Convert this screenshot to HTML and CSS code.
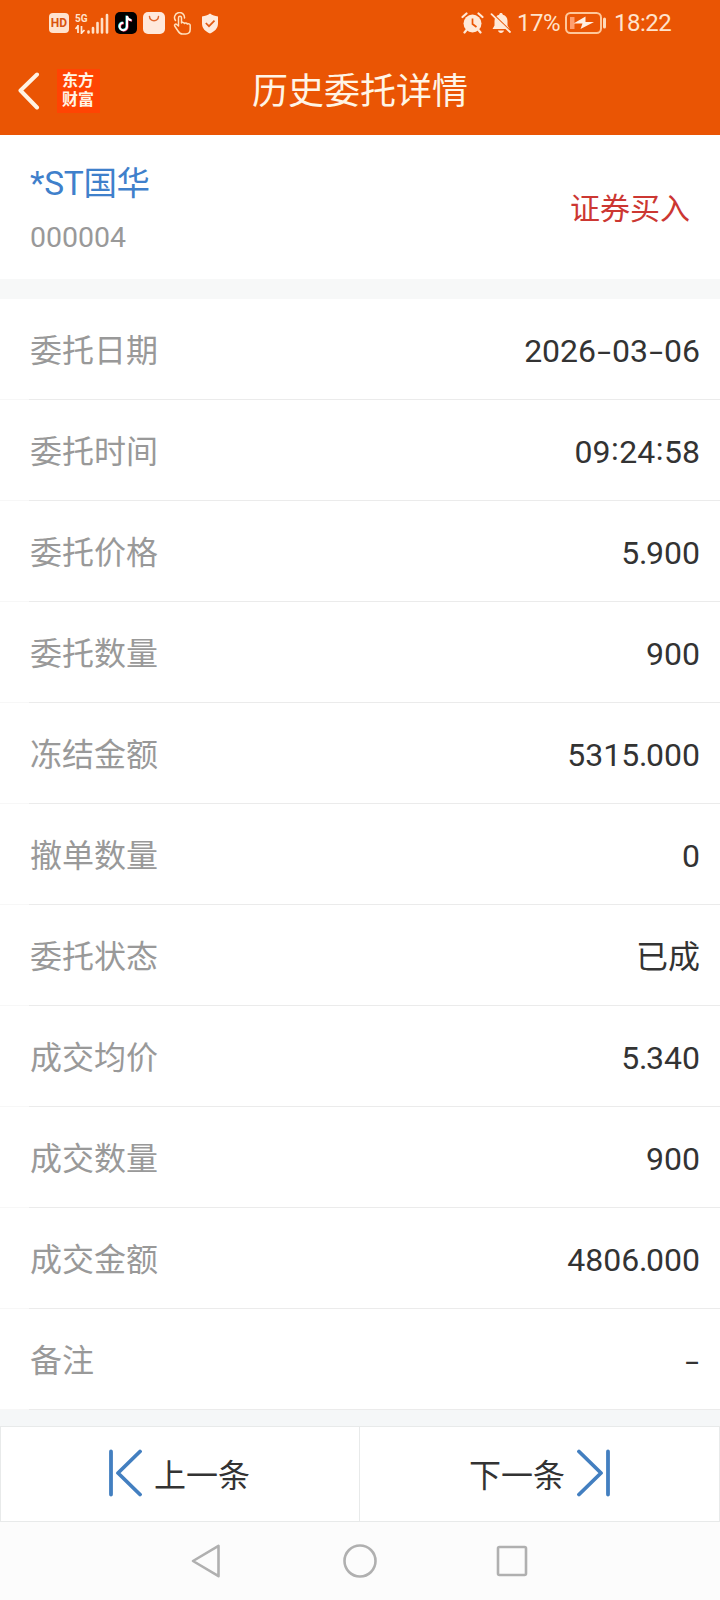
FILE: index.html
```
<!DOCTYPE html>
<html lang="zh-CN">
<head>
    <meta charset="UTF-8">
    <meta name="viewport" content="width=device-width, initial-scale=1.0">
    <title>历史委托详情</title>
    <link rel="stylesheet" href="styles.css">
</head>
<body>
    <header class="header">
        <div class="status-bar">
            <div class="status-left">
                <span class="hd-badge">HD</span>
                <div class="signal">
                    <div class="network">
                        <span>5G</span>
                        <svg width="10" height="9" viewBox="0 0 10 9"><path d="M3 0v8M3 1L0.5 4M6.5 1v8M6.500 8L9.500 5" fill="none" stroke="#ffe9d6" stroke-width="1.700"/></svg>
                    </div>
                    <svg width="22" height="21" viewBox="0 0 22 21"><path d="M1.500 18.500v1M6 15v4.500M10.500 10v9.500M15 6v13.500M20 2v17.500" stroke="#ffe0c6" stroke-width="2.600" stroke-linecap="round"/></svg>
                </div>
                <svg class="icon-music" width="22" height="22" viewBox="0 0 22 22">
                    <rect width="22" height="22" rx="5" fill="#000"/>
                    <path d="M12 4v10.500a3.700 3.700 0 1 1-3.700-3.700M12 4c.4 2.500 2 4 4.500 4.200" transform="translate(.6 .5)" fill="none" stroke="#f0406a" stroke-width="1.900"/>
                    <path d="M12 4v10.500a3.700 3.700 0 1 1-3.700-3.700M12 4c.4 2.500 2 4 4.500 4.200" transform="translate(-.6 -.4)" fill="none" stroke="#3fe3e6" stroke-width="1.900"/>
                    <path d="M12 4v10.500a3.700 3.700 0 1 1-3.700-3.700M12 4c.4 2.500 2 4 4.500 4.200" fill="none" stroke="#fff" stroke-width="2"/>
                </svg>
                <svg class="icon-bag" width="22" height="22" viewBox="0 0 22 22">
                    <rect width="22" height="22" rx="5" fill="#ffe9dc"/>
                    <path d="M6.500 4.500c.5 5.500 8.500 5.500 9 0" fill="none" stroke="#e0672f" stroke-width="1.500" stroke-linecap="round"/>
                </svg>
                <svg class="icon-hand" width="19" height="23" viewBox="0 0 19 23" fill="none" stroke="#ffe0bd" stroke-width="1.500" stroke-linecap="round" stroke-linejoin="round">
                    <path d="M2.500 8.500A5 5 0 1 1 11.500 6"/>
                    <path d="M5.500 14V5.800c0-2 3-2 3 0V11c.5-1 2.700-.8 2.900.5.600-1 2.700-.7 2.900.6.800-.8 2.900-.3 2.900 1.200v4c0 3-1.800 4.700-4.500 4.700H9.500c-2 0-3.500-1.300-4.500-3l-3.300-5c-.8-1.500 1-2.500 2-1.500z"/>
                </svg>
                <svg class="icon-shield" width="18" height="21" viewBox="0 0 18 21">
                    <path d="M9 .5c2.500 2 5 2.500 8 3v7c0 5-3.500 8-8 10-4.500-2-8-5-8-10v-7c3-.5 5.500-1 8-3z" fill="#ffeadc"/>
                    <path d="M4.800 10l3.200 3.200 5.500-5.500" fill="none" stroke="#e25a14" stroke-width="1.700"/>
                </svg>
            </div>
            <div class="status-right">
                <svg width="23" height="22" viewBox="0 0 23 22">
                    <path d="M1.500 5l4-3.500M21.500 5l-4-3.500M5.500 18l-2 2.500M17.500 18l2 2.500" stroke="#ffe9d8" stroke-width="2.200" stroke-linecap="round"/>
                    <circle cx="11.500" cy="11.500" r="9" fill="#ffe9d8"/>
                    <path d="M11.500 6.500V12l4 3" fill="none" stroke="#ea5504" stroke-width="1.700"/>
                </svg>
                <svg class="icon-bell" width="22" height="22" viewBox="0 0 22 22">
                    <path d="M11 1c1 0 1.800.7 1.800 1.700 3 .8 4.700 3 4.700 6.300v4.500l2 3.500H2.500l2-3.500V9c0-3.300 1.700-5.500 4.700-6.300C9.200 1.700 10 1 11 1zM8 18.500h6c-.5 3.300-5.500 3.300-6 0z" fill="#ffe9d8"/>
                    <path d="M2.500 1.500L21.500 20" stroke="#ea5504" stroke-width="1.500"/>
                    <path d="M1.500 2.200L20 20" stroke="#ffe9d8" stroke-width="1.800" stroke-linecap="round"/>
                </svg>
                <span class="percent">17%</span>
                <svg class="icon-battery" width="42" height="22" viewBox="0 0 42 22">
                    <rect x="1" y="1" width="35" height="20" rx="4.500" fill="none" stroke="#ffc79a" stroke-width="2"/>
                    <path d="M39.500 7v8" stroke="#ffd9b8" stroke-width="3" stroke-linecap="round"/>
                    <path d="M5 5h4.500v12H5z" fill="#ff9e6e"/>
                    <path d="M20.500 4.500L8.500 11.500h9l-2 5.500L29 10h-8.500z" fill="#fff0e4"/>
                </svg>
                <span class="clock">18:22</span>
            </div>
        </div>
        <div class="title-bar">
            <div class="title-left">
                <svg width="22" height="38" viewBox="0 0 22 38"><path d="M19 2.500L2.500 18.500 19 35.500" fill="none" stroke="#fff3e4" stroke-width="4" stroke-linecap="round" stroke-linejoin="round"/></svg>
                <div class="logo">东方<br>财富</div>
            </div>
            <h1>历史委托详情</h1>
        </div>
    </header>

    <section class="stock">
        <div>
            <div class="stock-name">*ST国华</div>
            <div class="stock-code">000004</div>
        </div>
        <div class="direction">证券买入</div>
    </section>

    <dl class="details">
        <div class="row"><dt>委托日期</dt><dd>2026<span class="dash">-</span>03<span class="dash">-</span>06</dd></div>
        <div class="row"><dt>委托时间</dt><dd>09<span class="colon">:</span>24<span class="colon">:</span>58</dd></div>
        <div class="row"><dt>委托价格</dt><dd>5<span class="point">.</span>900</dd></div>
        <div class="row"><dt>委托数量</dt><dd>900</dd></div>
        <div class="row"><dt>冻结金额</dt><dd>5315<span class="point">.</span>000</dd></div>
        <div class="row"><dt>撤单数量</dt><dd>0</dd></div>
        <div class="row"><dt>委托状态</dt><dd>已成</dd></div>
        <div class="row"><dt>成交均价</dt><dd>5<span class="point">.</span>340</dd></div>
        <div class="row"><dt>成交数量</dt><dd>900</dd></div>
        <div class="row"><dt>成交金额</dt><dd>4806<span class="point">.</span>000</dd></div>
        <div class="row"><dt>备注</dt><dd><span class="dash">-</span></dd></div>
    </dl>

    <div class="pager">
        <button class="prev">
            <svg width="34" height="48" viewBox="0 0 34 48"><path d="M3 2.500v43M32 2.500L10 24l22 21.500" fill="none" stroke="#437fc0" stroke-width="3.800" stroke-linecap="round" stroke-linejoin="round"/></svg>
            <span>上一条</span>
        </button>
        <button class="next">
            <span>下一条</span>
            <svg width="34" height="48" viewBox="0 0 34 48"><path d="M31 2.500v43M2 2.500L24 24 2 45.500" fill="none" stroke="#437fc0" stroke-width="3.800" stroke-linecap="round" stroke-linejoin="round"/></svg>
        </button>
    </div>

    <nav class="system-nav">
        <svg width="34" height="34" viewBox="0 0 34 34"><path d="M27.500 1.800v30.400L2 17z"/></svg>
        <svg width="34" height="34" viewBox="0 0 34 34"><circle cx="17" cy="17" r="15.500"/></svg>
        <svg width="34" height="34" viewBox="0 0 34 34"><rect x="3" y="3" width="28" height="28" rx="1.500"/></svg>
    </nav>
</body>
</html>
```
FILE: styles.css
```
* {
    box-sizing: border-box;
}
body {
    margin: 0;
    width: 720px;
    font-family: Roboto, "Noto Sans CJK SC", sans-serif;
    background: #fff;
    color: #333;
}
svg {
    display: block;
    flex: none;
}
.header {
    height: 135px;
    background: #ea5504;
    color: #fff5e6;
}
.status-bar {
    display: flex;
    justify-content: space-between;
    height: 46px;
    padding: 0 49px;
    color: #ffe3cc;
}
.status-left, .status-right {
    display: flex;
    align-items: center;
}
.hd-badge {
    width: 20px;
    height: 20px;
    border-radius: 4px;
    background: #ffe3cf;
    color: #d9530f;
    font-size: 12px;
    font-weight: 700;
    line-height: 20px;
    text-align: center;
}
.signal {
    display: flex;
    margin-left: 6px;
}
.network {
    width: 12px;
    font-size: 10px;
    font-weight: 700;
    line-height: 11px;
}
.network svg {
    margin-top: 1px;
}
.icon-music {
    margin-left: 6px;
}
.icon-bag {
    margin-left: 6px;
}
.icon-hand {
    margin-left: 8px;
}
.icon-shield {
    margin-left: 9px;
}
.status-right {
    font-size: 24px;
    line-height: 48px;
}
.icon-bell {
    margin-left: 6px;
}
.percent {
    width: 48px;
    margin-left: 5px;
    letter-spacing: -0.5px;
}
.icon-battery {
    margin-left: 0;
}
.clock {
    width: 57px;
    margin-left: 7px;
    letter-spacing: -0.5px;
}
.title-bar {
    display: grid;
    grid-template-columns: 1fr auto 1fr;
    align-items: center;
    height: 89px;
    padding: 0 18px;
}
.title-left {
    display: flex;
    align-items: center;
    gap: 17px;
}
.logo {
    width: 43px;
    height: 44px;
    padding: 2px 1px 0 0;
    background: #ff4403;
    font-size: 16px;
    font-weight: 700;
    line-height: 19px;
    text-align: center;
}
h1 {
    margin: 0;
    padding-top: 3px;
    font-size: 36px;
    font-weight: 400;
    line-height: 52px;
}
.stock {
    display: flex;
    align-items: center;
    justify-content: space-between;
    height: 144px;
    padding: 0 30px;
}
.stock-name {
    padding-top: 3px;
    font-size: 33.500px;
    line-height: 50px;
    letter-spacing: -0.3px;
    color: #3f80cb;
}
.stock-code {
    margin-top: 9px;
    font-size: 28.500px;
    line-height: 40px;
    color: #999;
}
.direction {
    padding-bottom: 2px;
    font-size: 30px;
    color: #cc3732;
}
.details {
    margin: 0;
    border-top: 20px solid #f7f8f8;
}
.row {
    display: flex;
    align-items: center;
    justify-content: space-between;
    height: 101px;
    padding: 3px 20px 0 30px;
    border-bottom: 1px solid #ebebeb;
    border-image: linear-gradient(to right, #f7f7f7 30px, #ebebeb 30px) 1;
    font-size: 32px;
    line-height: 48px;
}
dt {
    color: #999;
}
dd {
    margin: 0;
}
.dash {
    display: inline-block;
    width: 16px;
    text-align: center;
    transform: scaleX(1.55);
}
.colon {
    position: relative;
    top: -3px;
    padding: 0 0.500px;
}
.point {
    margin-right: -1.500px;
}
.pager {
    display: grid;
    grid-template-columns: 1fr 1fr;
    height: 112px;
    border-top: 16px solid #f5f7f8;
}
.pager button {
    display: flex;
    align-items: center;
    justify-content: center;
    gap: 12px;
    padding: 0 2px 2px 0;
    border: 1px solid #e8eaea;
    background: #fff;
    color: #333;
    font-family: inherit;
    font-size: 32px;
}
.pager .next {
    padding: 0 0 2px 1px;
    border-left: 0;
}
.system-nav {
    display: flex;
    justify-content: center;
    gap: 118px;
    height: 78px;
    padding-top: 22px;
    background: #fcfcfc;
}
.system-nav svg {
    fill: none;
    stroke: #b0b0b0;
    stroke-width: 2.600;
    stroke-linejoin: round;
}
```
